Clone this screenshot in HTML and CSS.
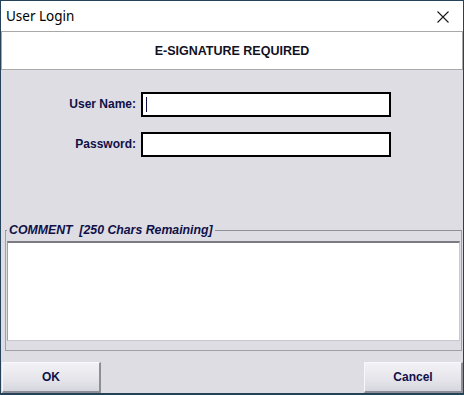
FILE: index.html
```html
<!DOCTYPE html>
<html lang="en">
<head>
    <meta charset="UTF-8">
    <title>User Login</title>
    <link rel="stylesheet" href="styles.css">
</head>
<body>
    <div class="window">
        <div class="title-bar">
            <span class="title">User Login</span>
            <svg class="close" width="12" height="12" viewBox="0 0 12 12">
                <path d="M0.5 0.5 L11.5 11.5 M11.5 0.5 L0.5 11.5" stroke="#1a1a1a" stroke-width="1.1" fill="none"/>
            </svg>
        </div>
        <div class="header">E-SIGNATURE REQUIRED</div>
        <div class="form">
            <div class="row">
                <label class="label" for="user">User Name:</label>
                <div class="input"><span class="caret"></span></div>
            </div>
            <div class="row">
                <label class="label" for="pass">Password:</label>
                <div class="input"></div>
            </div>
        </div>
        <div class="comment">
            <div class="legend">COMMENT &nbsp;[250 Chars Remaining]</div>
            <div class="comment-box"></div>
        </div>
        <div class="buttons">
            <button class="btn">OK</button>
            <button class="btn">Cancel</button>
        </div>
    </div>
</body>
</html>
```

FILE: styles.css
```css
body {
    margin: 0;
    padding: 0;
    background-color: #1e3a4c;
}
.window {
    width: 464px;
    height: 395px;
    box-sizing: border-box;
    border: 1px solid #24435a;
    border-bottom-width: 2px;
    background-color: #dedde3;
    display: flex;
    flex-direction: column;
}
.title-bar {
    height: 31px;
    background-color: #fff;
    display: flex;
    align-items: center;
    justify-content: space-between;
    padding: 0 14px 0 5px;
}
.title {
    font-family: 'Noto Sans', sans-serif;
    font-size: 13.5px;
    color: #000;
    margin-top: -1px;
}
.close {
    margin-top: 1px;
}
.header {
    background-color: #fff;
    border: 1px solid #a8a8a8;
    display: flex;
    align-items: center;
    justify-content: center;
    padding-top: 2px;
    box-sizing: border-box;
    height: 39px;
    font-family: 'Liberation Sans', Arial, sans-serif;
    font-weight: bold;
    font-size: 12.5px;
    color: #111122;
}
.form {
    height: 164px;
    padding-top: 22px;
    box-sizing: border-box;
    display: flex;
    flex-direction: column;
    gap: 15px;
}
.row {
    display: flex;
    align-items: center;
}
.label {
    width: 135px;
    margin-right: 5px;
    text-align: right;
    font-family: 'Liberation Sans', Arial, sans-serif;
    font-weight: bold;
    font-size: 12px;
    color: #101048;
}
.input {
    width: 250px;
    height: 25px;
    box-sizing: border-box;
    background-color: #fff;
    border: 2px solid #000;
    display: flex;
    align-items: center;
    padding-left: 3px;
}
.caret {
    width: 1px;
    height: 15px;
    background-color: #101048;
}
.comment {
    margin: 0 1px 0 4px;
    border: 1px solid #a0a0a8;
    border-top-color: #909098;
    height: 111px;
    position: relative;
    padding: 10px 1px 0 1px;
}
.legend {
    position: absolute;
    top: -8px;
    left: 1px;
    padding: 0 2px;
    background-color: #dedde3;
    font-family: 'Liberation Sans', Arial, sans-serif;
    font-weight: bold;
    font-style: italic;
    font-size: 12.3px;
    color: #101048;
}
.comment-box {
    height: 97px;
    background-color: #fff;
    border-top: 2px solid #7a7a80;
    border-left: 1px solid #a0a0a8;
    border-right: 1px solid #c8c8d0;
    border-bottom: 1px solid #c8c8d0;
}
.buttons {
    display: flex;
    justify-content: space-between;
    padding: 11px 0 0 1px;
}
.btn {
    width: 99px;
    height: 31px;
    border: none;
    border-right: 2px solid #8e8e96;
    border-bottom: 2px solid #8e8e96;
    border-top: 1px solid #f8f8fc;
    border-left: 1px solid #f8f8fc;
    background: linear-gradient(#f2f2f6, #e4e4ea 60%, #d6d6de);
    font-family: 'Liberation Sans', Arial, sans-serif;
    font-weight: bold;
    font-size: 12px;
    color: #101048;
    padding: 0;
}
```
